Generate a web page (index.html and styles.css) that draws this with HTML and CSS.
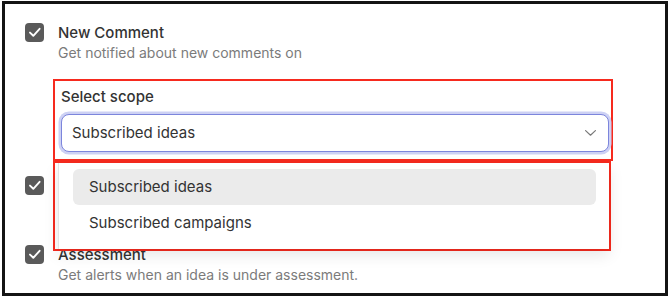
FILE: index.html
```html
<!DOCTYPE html>
<html lang="en">
<head>
<meta charset="utf-8">
<title>Notification settings</title>
<link rel="stylesheet" href="styles.css">
</head>
<body>
<div class="frame">
  <ul class="list">
    <li class="item">
      <span class="checkbox"><svg viewBox="0 0 19 19" width="19" height="19"><path d="M5 9.6 L8.3 12.8 L14.6 5.8" fill="none" stroke="#fff" stroke-width="1.9" stroke-linecap="round" stroke-linejoin="round"/></svg></span>
      <div class="text">
        <div class="title">New Comment</div>
        <div class="desc">Get notified about new comments on</div>
        <div class="scope">
          <div class="scope-label">Select scope</div>
          <div class="select">
            <span class="select-value">Subscribed ideas</span>
            <svg class="chevron" viewBox="0 0 11 6" width="11" height="6"><path d="M0.6 0.6 L5.5 5.2 L10.4 0.6" fill="none" stroke="#7a7a7a" stroke-width="1.2" stroke-linecap="round" stroke-linejoin="round"/></svg>
          </div>
          <div class="menu-annot">
            <div class="menu">
              <div class="option option-active">Subscribed ideas</div>
              <div class="option">Subscribed campaigns</div>
            </div>
          </div>
        </div>
      </div>
    </li>
    <li class="item item-spaced">
      <span class="checkbox"><svg viewBox="0 0 19 19" width="19" height="19"><path d="M5 9.6 L8.3 12.8 L14.6 5.8" fill="none" stroke="#fff" stroke-width="1.9" stroke-linecap="round" stroke-linejoin="round"/></svg></span>
      <div class="text">
        <div class="title">Status Change</div>
        <div class="desc">Get notified when the status of an idea changes.</div>
      </div>
    </li>
    <li class="item">
      <span class="checkbox"><svg viewBox="0 0 19 19" width="19" height="19"><path d="M5 9.6 L8.3 12.8 L14.6 5.8" fill="none" stroke="#fff" stroke-width="1.9" stroke-linecap="round" stroke-linejoin="round"/></svg></span>
      <div class="text">
        <div class="title">Assessment</div>
        <div class="desc">Get alerts when an idea is under assessment.</div>
      </div>
    </li>
  </ul>
</div>
</body>
</html>
```

FILE: styles.css
```css
* { box-sizing: border-box; }
html, body { margin: 0; padding: 0; background: #ffffff; }
body { font-family: Inter, "Liberation Sans", sans-serif; color: #2f2f2f; }

.frame {
  margin: 1px 0 0 2px;
  width: 666px;
  height: 295px;
  border: 3px solid #141414;
  background: #ffffff;
  overflow: hidden;
}

.list {
  list-style: none;
  margin: 0;
  padding: 19px 20px 0 20px;
  display: flex;
  flex-direction: column;
  gap: 15px;
}

.item {
  display: flex;
  align-items: flex-start;
  gap: 14px;
}

.item-spaced { margin-bottom: 14px; }

.checkbox {
  flex: 0 0 19px;
  width: 19px;
  height: 19px;
  margin-top: 0;
  border-radius: 4px;
  background: #5a5a5a;
  display: flex;
}

.text { flex: 1; min-width: 0; }

.title {
  font-size: 15px;
  line-height: 20px;
  font-weight: 500;
  color: #333333;
}

.desc {
  font-size: 14px;
  line-height: 20px;
  color: #7b7b7b;
}

.scope {
  position: relative;
  margin: 16px 0 0 -5px;
  width: 560px;
  padding: 6px 2px 7px 6px;
  border: 2px solid #f62a1e;
}

.scope-label {
  font-size: 15px;
  line-height: 20px;
  font-weight: 500;
  color: #333333;
  margin-bottom: 7px;
}

.select {
  height: 38px;
  border: 1.5px solid #7c85dc;
  border-radius: 8px;
  box-shadow: 0 0 0 2.5px #cdd1f4;
  display: flex;
  align-items: center;
  justify-content: space-between;
  padding: 0 12px 0 10px;
  background: #ffffff;
}

.select-value {
  font-size: 15px;
  line-height: 20px;
  color: #333333;
}

.chevron { display: block; }

.menu-annot {
  position: absolute;
  top: calc(100% + 2px);
  left: -2px;
  width: 558px;
  height: 90px;
  border: 2px solid #f62a1e;
  z-index: 2;
}

.menu {
  margin-left: 3px;
  height: 100%;
  background: #ffffff;
  border-left: 1px solid #e4e4e4;
  box-shadow: 0 6px 14px rgba(0, 0, 0, 0.10);
  padding: 6px 13px 0 14px;
}

.option {
  height: 36px;
  border-radius: 6px;
  padding-left: 16px;
  display: flex;
  align-items: center;
  font-size: 15px;
  line-height: 20px;
  color: #333333;
}

.option-active { background: #ebebeb; }
```
